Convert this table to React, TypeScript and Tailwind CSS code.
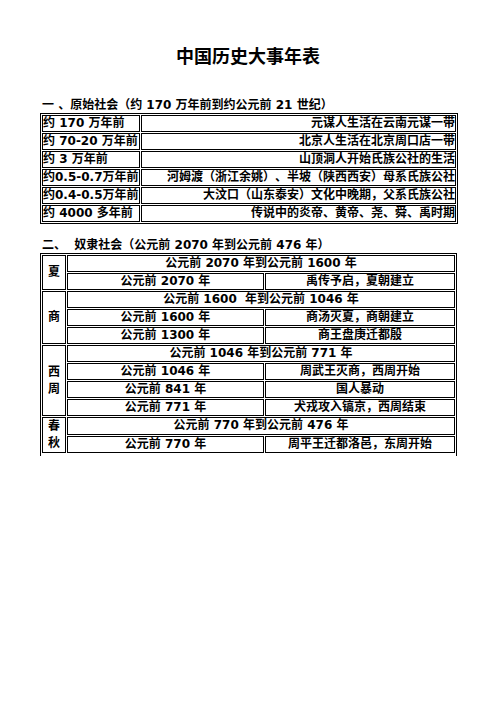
import React from 'react';

const font = { fontFamily: '"DejaVu Sans", "Noto Sans CJK SC", sans-serif' };

const primitive: [string, string][] = [
  ['约 170 万年前', '元谋人生活在云南元谋一带'],
  ['约 70-20 万年前', '北京人生活在北京周口店一带'],
  ['约 3 万年前', '山顶洞人开始氏族公社的生活'],
  ['约0.5-0.7万年前', '河姆渡（浙江余姚）、半坡（陕西西安）母系氏族公社'],
  ['约0.4-0.5万年前', '大汶口（山东泰安）文化中晚期，父系氏族公社'],
  ['约 4000 多年前', '传说中的炎帝、黄帝、尧、舜、禹时期'],
];

interface Dynasty {
  name: string;
  range: string;
  events: [string, string][];
}

const slavery: Dynasty[] = [
  { name: '夏', range: '公元前 2070 年到公元前 1600 年', events: [['公元前 2070 年', '禹传予启，夏朝建立']] },
  {
    name: '商',
    range: '公元前 1600  年到公元前 1046 年',
    events: [
      ['公元前 1600 年', '商汤灭夏，商朝建立'],
      ['公元前 1300 年', '商王盘庚迁都殷'],
    ],
  },
  {
    name: '西周',
    range: '公元前 1046 年到公元前 771 年',
    events: [
      ['公元前 1046 年', '周武王灭商，西周开始'],
      ['公元前 841 年', '国人暴动'],
      ['公元前 771 年', '犬戎攻入镐京，西周结束'],
    ],
  },
  { name: '春秋', range: '公元前 770 年到公元前 476 年', events: [['公元前 770 年', '周平王迁都洛邑，东周开始']] },
];

const cell = 'border border-black p-0 h-[17px] leading-[15px] whitespace-pre';

export default function App() {
  return (
    <div
      className="w-[496px] h-[702px] bg-white text-black font-bold text-[12px] [text-spacing-trim:space-all]"
      style={font}
    >
      <div className="pt-[45px] text-center text-[18px] leading-[24px]">中国历史大事年表</div>

      <div className="mt-[28px] pl-[42px] leading-[16px]">一 、原始社会（约 170 万年前到约公元前 21 世纪）</div>
      <div className="px-[40px]">
        <table className="w-[418px] border-separate border-spacing-[1px] border border-black">
          <tbody>
            {primitive.map(([when, what]) => (
              <tr key={when}>
                <td className={`${cell} w-[98px] text-left`}>{when}</td>
                <td className={`${cell} text-right`}>{what}</td>
              </tr>
            ))}
          </tbody>
        </table>
      </div>

      <div className="mt-[13px] pl-[42px] leading-[16px] whitespace-pre">二、  奴隶社会（公元前 2070 年到公元前 476 年）</div>
      <div className="px-[40px]">
        <table className="w-[417px] border-separate border-spacing-[1px] border-x border-t border-black pb-[2px]">
          <tbody>
            {slavery.map((d) => (
              <React.Fragment key={d.name}>
                <tr>
                  <td
                    rowSpan={d.events.length + 1}
                    className="border border-black p-0 w-[24px] text-center leading-[17px] whitespace-normal break-all"
                  >
                    {d.name}
                  </td>
                  <td colSpan={2} className={`${cell} text-center`}>
                    {d.range}
                  </td>
                </tr>
                {d.events.map(([when, what]) => (
                  <tr key={when}>
                    <td className={`${cell} w-[197px] text-center`}>{when}</td>
                    <td className={`${cell} text-center`}>{what}</td>
                  </tr>
                ))}
              </React.Fragment>
            ))}
          </tbody>
        </table>
      </div>
    </div>
  );
}
